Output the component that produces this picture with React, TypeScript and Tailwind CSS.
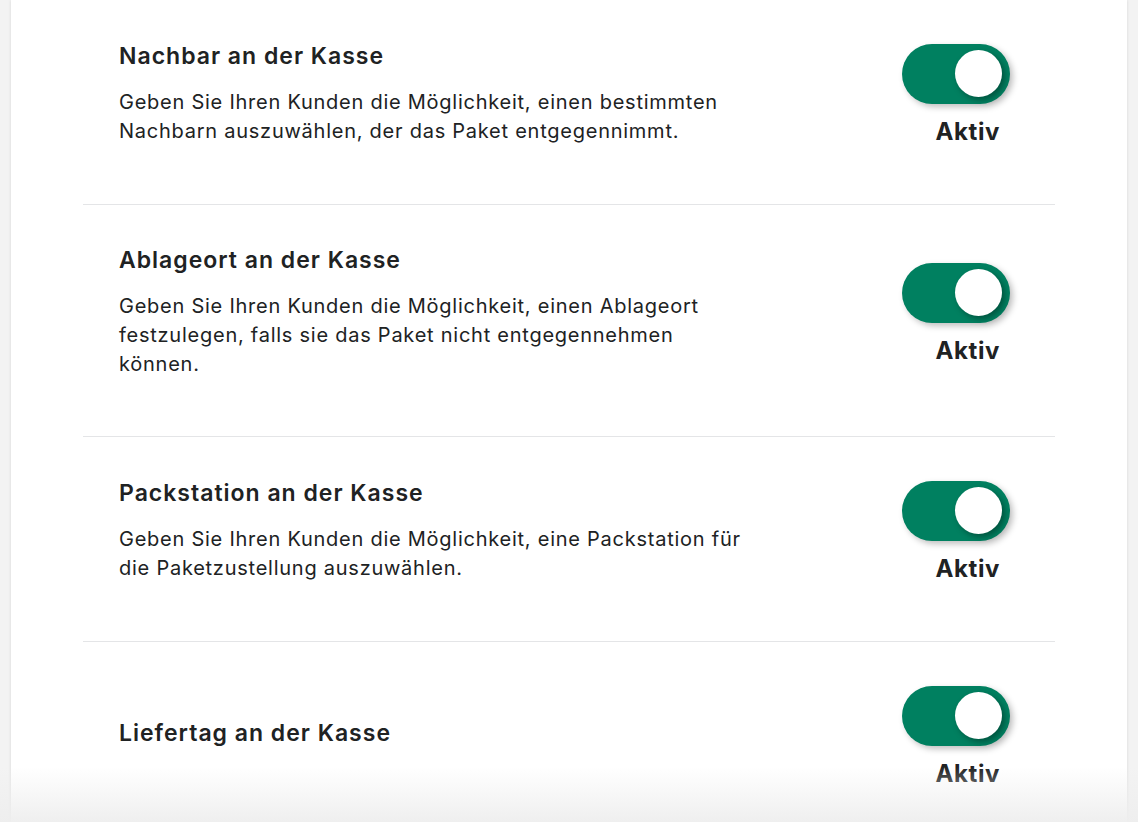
import React from "react";

type Item = { title: string; desc?: string };

const items: Item[] = [
  {
    title: "Nachbar an der Kasse",
    desc: "Geben Sie Ihren Kunden die Möglichkeit, einen bestimmten Nachbarn auszuwählen, der das Paket entgegennimmt.",
  },
  {
    title: "Ablageort an der Kasse",
    desc: "Geben Sie Ihren Kunden die Möglichkeit, einen Ablageort festzulegen, falls sie das Paket nicht entgegennehmen können.",
  },
  {
    title: "Packstation an der Kasse",
    desc: "Geben Sie Ihren Kunden die Möglichkeit, eine Packstation für die Paketzustellung auszuwählen.",
  },
  { title: "Liefertag an der Kasse" },
];

function Toggle() {
  return (
    <div className="flex flex-col items-end pt-[3px]">
      <div className="relative w-[108px] h-[60px] rounded-full bg-[#008060] shadow-[3px_3px_6px_rgba(0,0,0,0.25)]">
        <div className="absolute right-[8px] top-[6px] w-[47px] h-[47px] rounded-full bg-white shadow-[3px_3px_6px_rgba(0,0,0,0.35)]" />
      </div>
      <div className="mt-[13px] pr-[10px] text-[24px] leading-[30px] font-bold tracking-[0.6px] text-[#202223]">
        Aktiv
      </div>
    </div>
  );
}

export default function App() {
  return (
    <div
      className="relative w-[1138px] h-[822px] overflow-hidden bg-[#f3f3f3]"
      style={{ fontFamily: "Inter, 'Noto Sans', sans-serif" }}
    >
      <div className="mx-[11px] h-full bg-white px-[72px] shadow-[0_0_3px_rgba(0,0,0,0.12)]">
        {items.map((it, i) => (
          <div
            key={i}
            className={`flex items-center justify-between pl-[36px] pr-[45px] pt-[41px] pb-[57px] ${
              i < items.length - 1 ? "border-b border-[#e4e5e7]" : ""
            }`}
          >
            <div className="flex w-[630px] flex-col">
              <div className="mb-[6px] text-[23px] leading-[28px] font-semibold tracking-[1px] text-[#202223]">
                {it.title}
              </div>
              {it.desc && (
                <div className="mt-[12px] text-[20px] leading-[29px] tracking-[0.75px] text-[#202223]">
                  {it.desc}
                </div>
              )}
            </div>
            <Toggle />
          </div>
        ))}
      </div>
      <div className="absolute left-0 right-0 bottom-0 h-[55px] bg-gradient-to-b from-[rgba(243,243,243,0)] to-[rgba(238,238,238,0.95)]" />
    </div>
  );
}
